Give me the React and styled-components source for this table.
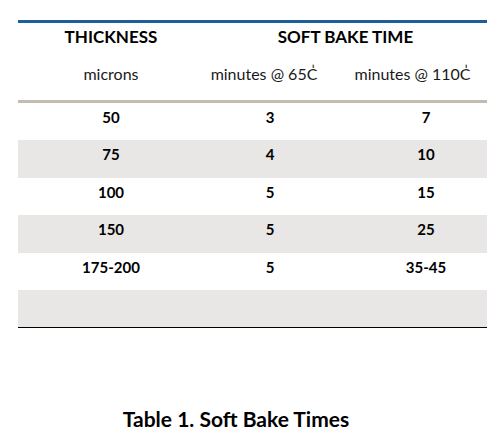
import React from "react";
import styled, { createGlobalStyle } from "styled-components";

const Global = createGlobalStyle`
  html, body { margin: 0; padding: 0; background: #ffffff; }
  body { font-family: Lato, "Open Sans", sans-serif; color: #000; }
`;

const Page = styled.div`
  width: 497px;
  height: 438px;
  padding-top: 20px;
  padding-left: 18px;
  box-sizing: border-box;
`;

const Table = styled.div`
  width: 469px;
  display: grid;
  grid-template-columns: 186px 132px 151px;
  border-top: 3px solid #1d5e9b;
`;

const HeadCell = styled.div`
  grid-column: ${(p) => p.$span || "auto"};
  text-align: center;
  font-weight: 700;
  font-size: 17px;
  line-height: 20px;
  height: 38px;
  padding-top: 4px;
  box-sizing: border-box;
  padding-left: ${(p) => p.$pl || 0}px;
  padding-right: ${(p) => p.$pr || 0}px;
`;

const SubCell = styled.div`
  text-align: center;
  font-size: 16px;
  line-height: 20px;
  height: 42px;
  padding-top: 3px;
  box-sizing: border-box;
  color: #1a1a1a;
  border-bottom: 3px solid #c4bbb2;
  padding-left: ${(p) => p.$pl || 0}px;
  padding-right: ${(p) => p.$pr || 0}px;
`;

const DataCell = styled.div`
  position: relative;
  text-align: center;
  font-weight: 700;
  font-size: 15px;
  line-height: 18px;
  height: ${(p) => p.$h}px;
  padding-top: 5px;
  box-sizing: border-box;
  background: ${(p) => (p.$shade ? "#e9e7e5" : "#ffffff")};
  border-bottom: ${(p) => (p.$last ? "1px solid #000" : "none")};
  padding-left: ${(p) => p.$pl || 0}px;
  padding-right: ${(p) => p.$pr || 0}px;
`;

const Tick = styled.span`
  position: absolute;
  right: -3px;
  bottom: 1px;
  width: 1px;
  height: 1px;
  background: #333;
`;

const Caption = styled.div`
  margin-top: 79px;
  width: 469px;
  text-align: center;
  font-weight: 700;
  font-size: 21px;
  line-height: 24px;
  padding-right: 33px;
  box-sizing: border-box;
`;

const rows = [
  ["50", "3", "7"],
  ["75", "4", "10"],
  ["100", "5", "15"],
  ["150", "5", "25"],
  ["175-200", "5", "35-45"],
  ["", "", ""],
];

export default function App() {
  return (
    <>
      <Global />
      <Page>
        <Table>
          <HeadCell>THICKNESS</HeadCell>
          <HeadCell $span="2 / span 2">SOFT BAKE TIME</HeadCell>
          <SubCell>microns</SubCell>
          <SubCell $pr={12}>minutes @ 65C&#x030D;</SubCell>
          <SubCell $pl={2}>minutes @ 110C&#x030D;</SubCell>
          {rows.map((r, i) => {
            const shade = i % 2 === 1;
            const h = i % 2 === 0 ? 37 : 38;
            const last = i === rows.length - 1;
            return (
              <React.Fragment key={i}>
                <DataCell $shade={shade} $h={h} $last={last}>
                  {r[0]}
                  {last && <Tick />}
                </DataCell>
                <DataCell $shade={shade} $h={h} $last={last}>
                  {r[1]}
                </DataCell>
                <DataCell $shade={shade} $h={h} $last={last} $pl={29}>
                  {r[2]}
                </DataCell>
              </React.Fragment>
            );
          })}
        </Table>
        <Caption>Table 1. Soft Bake Times</Caption>
      </Page>
    </>
  );
}
